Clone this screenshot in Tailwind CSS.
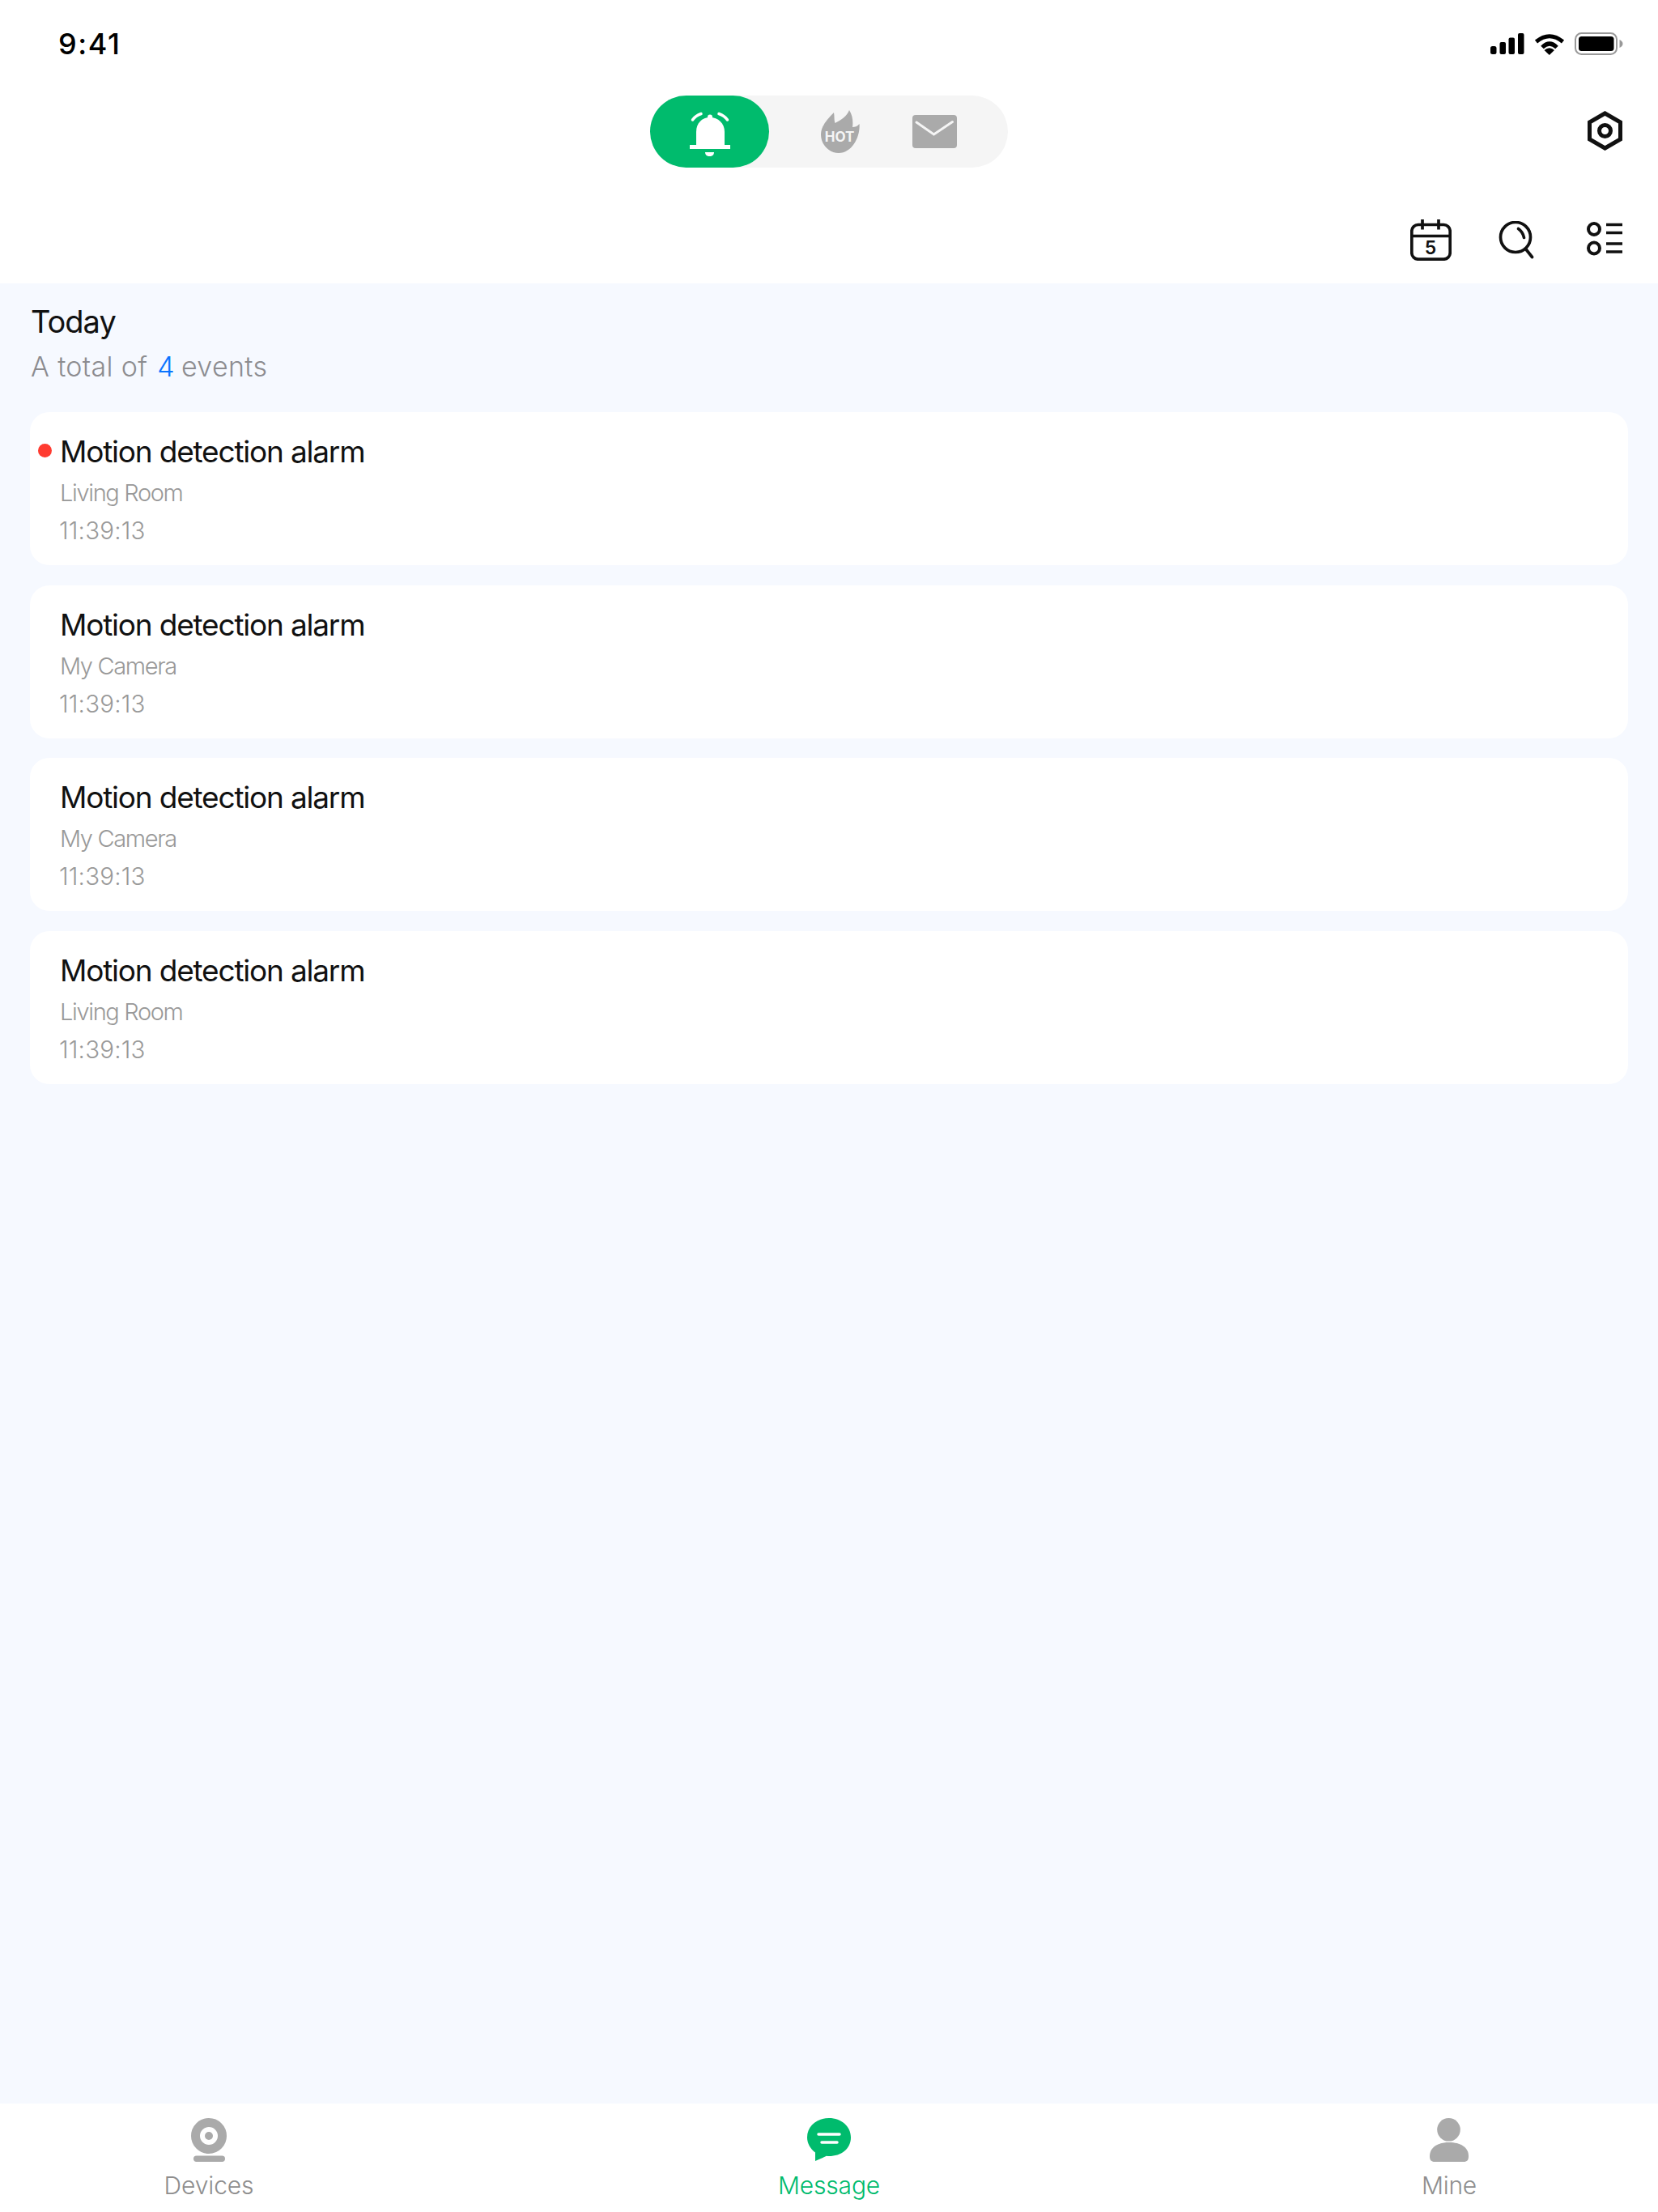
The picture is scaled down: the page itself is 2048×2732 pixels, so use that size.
<!DOCTYPE html>
<html>
<head>
    <meta charset="utf-8">
    <script src="https://cdn.jsdelivr.net/npm/@tailwindcss/browser@4"></script>
</head>
<body class="bg-white">
    <div class="w-[2048px] h-[2732px] flex flex-col bg-[#f6f9ff] overflow-hidden font-['Inter',sans-serif]">
        <!-- top area -->
        <div class="h-[350px] shrink-0 bg-white flex flex-col">
            <div class="h-[108px] flex items-center justify-between pl-[72px] pr-[43px]">
                <span class="text-[36px] font-medium text-black tracking-[1.6px]">9:41</span>
                <div class="flex items-center gap-[12px]">
                    <svg width="42" height="26" viewBox="0 0 42 26" fill="#000"><rect x="0" y="16" width="7.5" height="10" rx="2.5"/><rect x="11.5" y="11" width="7.5" height="15" rx="2"/><rect x="22.5" y="5.5" width="7.5" height="20.5" rx="2"/><rect x="34" y="0" width="7.5" height="26" rx="2"/></svg>
                    <svg width="38" height="27" viewBox="0 0 38 27"><path d="M2.5 10.5Q19 -3 35.500 10.500" fill="none" stroke="#000" stroke-width="5"/><path d="M10 17.500Q19 8.500 28 17.500" fill="none" stroke="#000" stroke-width="5"/><path d="M12.500 21Q19 15.500 25 21L18.800 27Z" fill="#000"/></svg>
                    <svg width="60" height="28" viewBox="0 0 60 28"><rect x="1" y="1" width="51" height="26" rx="7.500" fill="none" stroke="#999" stroke-width="2"/><rect x="5" y="5" width="43.500" height="18" rx="3.500" fill="#000"/><path d="M55.500 9C58 10 59.500 12 59.500 14S58 18 55.500 19Z" fill="#999"/></svg>
                </div>
            </div>
            <div class="mt-[10px] h-[89px] flex items-center">
                <div class="flex-1"></div>
                <div class="w-[442px] h-[89px] rounded-full bg-[#f5f5f5] flex items-center">
                    <div class="w-[147px] h-[89px] rounded-full bg-[#00bb6d] flex items-center justify-center">
                        <svg class="mt-[6px]" width="50" height="56" viewBox="0 0 50 56" fill="#fff"><path d="M3.500 10Q7 5 14 2.500" fill="none" stroke="#fff" stroke-width="3.500" stroke-linecap="round"/><path d="M36 2.500Q43 5 46.500 10" fill="none" stroke="#fff" stroke-width="3.500" stroke-linecap="round"/><circle cx="25" cy="6.500" r="3"/><path d="M8 42V25C8 14 15 7 25 7S43 14 43 25V42Z"/><rect x="0" y="41" width="50" height="5"/><path d="M19 50H30C30 53 28 55 24.500 55S19 53 19 50Z"/></svg>
                    </div>
                    <svg class="ml-[63px]" width="50" height="54" viewBox="0 0 50 54"><path d="M17 3C18 8 17 12 18.500 16C26 12 33 8 36 0C40 6 41 14 40 21C43 21 46 20 48.500 17C50 32 40 53 23 53C10 53 1 42 1 30C1 20 9 11 17 3Z" fill="#aaaaaa"/><text x="24" y="39" text-anchor="middle" font-family="Inter" font-size="17" font-weight="700" fill="#f5f5f5">HOT</text></svg>
                    <svg class="ml-[64px]" width="55" height="41" viewBox="0 0 55 41"><rect width="55" height="41" rx="4" fill="#aaaaaa"/><path d="M5 9L26.500 24L49.500 8.500" fill="none" stroke="#f5f5f5" stroke-width="3" stroke-linecap="round"/></svg>
                </div>
                <div class="flex-1 flex justify-end">
                    <svg class="mr-[44px] -mt-[2px]" width="43" height="49" viewBox="0 0 43 49" fill="none" stroke="#111" stroke-width="5"><path d="M21.500 3L40.500 14V35L21.500 46L2.500 35V14Z"/><circle cx="21.500" cy="24.500" r="7"/></svg>
                </div>
            </div>
            <div class="mt-[64px] flex items-start justify-end pr-[44px]">
                <svg width="51" height="51" viewBox="0 0 51 51" fill="none" stroke="#111" stroke-width="3.700"><rect x="1.800" y="6.500" width="47.400" height="42.700" rx="8"/><path d="M1.800 20.500H49.200"/><path d="M15 0V12.500M35 0V12.500"/><text x="25" y="42.500" text-anchor="middle" font-family="Inter" font-size="23" font-weight="600" fill="#111" stroke="none">5</text></svg>
                <svg class="ml-[58px] mt-[2px]" width="44" height="47" viewBox="0 0 44 47" fill="none" stroke="#111" stroke-width="3.700"><circle cx="21" cy="20" r="18.500"/><path d="M34 35L41.500 44.500" stroke-linecap="round"/><path d="M24.500 9.500C28 12 30.500 15.500 31.500 20.500" stroke-linecap="round"/></svg>
                <svg class="ml-[65px] mt-[3px]" width="44" height="44" viewBox="0 0 44 44" fill="none" stroke="#111" stroke-width="4"><circle cx="9" cy="9" r="7"/><circle cx="9" cy="32.500" r="7"/><path d="M24 3.500H44M24 13.500H44M24 27H44M24 37H44" stroke-width="3.300"/></svg>
            </div>
        </div>

        <!-- list -->
        <div class="flex-1 flex flex-col px-[37px]">
            <div class="mt-[22px] pl-[1px] text-[38px] leading-[50px] tracking-[-1px] font-[370] text-[#111]">Today</div>
            <div class="mt-[6px] pl-[1px] text-[34px] leading-[50px] tracking-[0.35px] font-[350] text-[#8c8c90]">A total of <span class="ml-[2px] -mr-[2px] text-[#0a74ff]">4</span> events</div>
            <div class="mt-[31px] flex flex-col gap-[24.67px]">
                <div class="h-[189px] rounded-[24px] bg-white pl-[37px] pt-[24px]">
                    <div class="relative text-[37px] leading-[50px] tracking-[-1.2px] font-[370] text-[#111]">
                        <span class="absolute -left-[27px] top-[15px] w-[17px] h-[17px] rounded-full bg-[#ff3b30]"></span>
                        Motion detection alarm
                    </div>
                    <div class="mt-[6px] text-[29px] leading-[40px] tracking-[-1.35px] font-light text-[#999]">Living Room</div>
                    <div class="mt-[6px] -ml-[1px] text-[29.5px] leading-[40px] tracking-[0.2px] font-light text-[#999]">11:39:13</div>
                </div>
                <div class="h-[189px] rounded-[24px] bg-white pl-[37px] pt-[24px]">
                    <div class="text-[37px] leading-[50px] tracking-[-1.2px] font-[370] text-[#111]">Motion detection alarm</div>
                    <div class="mt-[6px] text-[29px] leading-[40px] tracking-[-1.35px] font-light text-[#999]">My Camera</div>
                    <div class="mt-[6px] -ml-[1px] text-[29.5px] leading-[40px] tracking-[0.2px] font-light text-[#999]">11:39:13</div>
                </div>
                <div class="h-[189px] rounded-[24px] bg-white pl-[37px] pt-[24px]">
                    <div class="text-[37px] leading-[50px] tracking-[-1.2px] font-[370] text-[#111]">Motion detection alarm</div>
                    <div class="mt-[6px] text-[29px] leading-[40px] tracking-[-1.35px] font-light text-[#999]">My Camera</div>
                    <div class="mt-[6px] -ml-[1px] text-[29.5px] leading-[40px] tracking-[0.2px] font-light text-[#999]">11:39:13</div>
                </div>
                <div class="h-[189px] rounded-[24px] bg-white pl-[37px] pt-[24px]">
                    <div class="text-[37px] leading-[50px] tracking-[-1.2px] font-[370] text-[#111]">Motion detection alarm</div>
                    <div class="mt-[6px] text-[29px] leading-[40px] tracking-[-1.35px] font-light text-[#999]">Living Room</div>
                    <div class="mt-[6px] -ml-[1px] text-[29.5px] leading-[40px] tracking-[0.2px] font-light text-[#999]">11:39:13</div>
                </div>
            </div>
        </div>

        <!-- tab bar -->
        <div class="h-[134px] shrink-0 bg-white flex justify-between px-[130px] pt-[18px]">
            <div class="w-[256px] flex flex-col items-center">
                <svg width="44" height="54" viewBox="0 0 44 54"><circle cx="22" cy="22" r="16.500" fill="none" stroke="#aaaaaa" stroke-width="11"/><circle cx="22" cy="22" r="5" fill="#aaaaaa"/><rect x="3" y="46.500" width="39" height="7.500" rx="3.700" fill="#aaaaaa"/></svg>
                <span class="mt-[9px] text-[30px] leading-[40px] tracking-[-0.1px] font-[350] text-[#8e8e8e]">Devices</span>
            </div>
            <div class="w-[256px] flex flex-col items-center">
                <svg width="54" height="54" viewBox="0 0 54 54"><path d="M10 53V42.500C4 38 0 31 0 24C0 10 12 0 27 0S54 10 54 24S42 47 27 47C26 47 25 47 24 46.800Z" fill="#00bb6d"/><path d="M14 20H40" stroke="#fff" stroke-width="3.500" stroke-linecap="round"/><path d="M18 30H37" stroke="#fff" stroke-width="3.500" stroke-linecap="round"/></svg>
                <span class="mt-[9px] text-[30px] leading-[40px] tracking-[-0.2px] font-[350] text-[#00bb6d]">Message</span>
            </div>
            <div class="w-[256px] flex flex-col items-center">
                <svg width="48" height="54" viewBox="0 0 48 54" fill="#aaaaaa"><circle cx="23.500" cy="14.300" r="14.300"/><path d="M0 47C0 36 10 30 24 30C38 30 48 36 48 47C48 52 46 54 42 54H6C2 54 0 52 0 47Z"/></svg>
                <span class="mt-[9px] text-[30px] leading-[40px] tracking-[-0.3px] font-[350] text-[#8e8e8e]">Mine</span>
            </div>
        </div>
    </div>
</body>
</html>
